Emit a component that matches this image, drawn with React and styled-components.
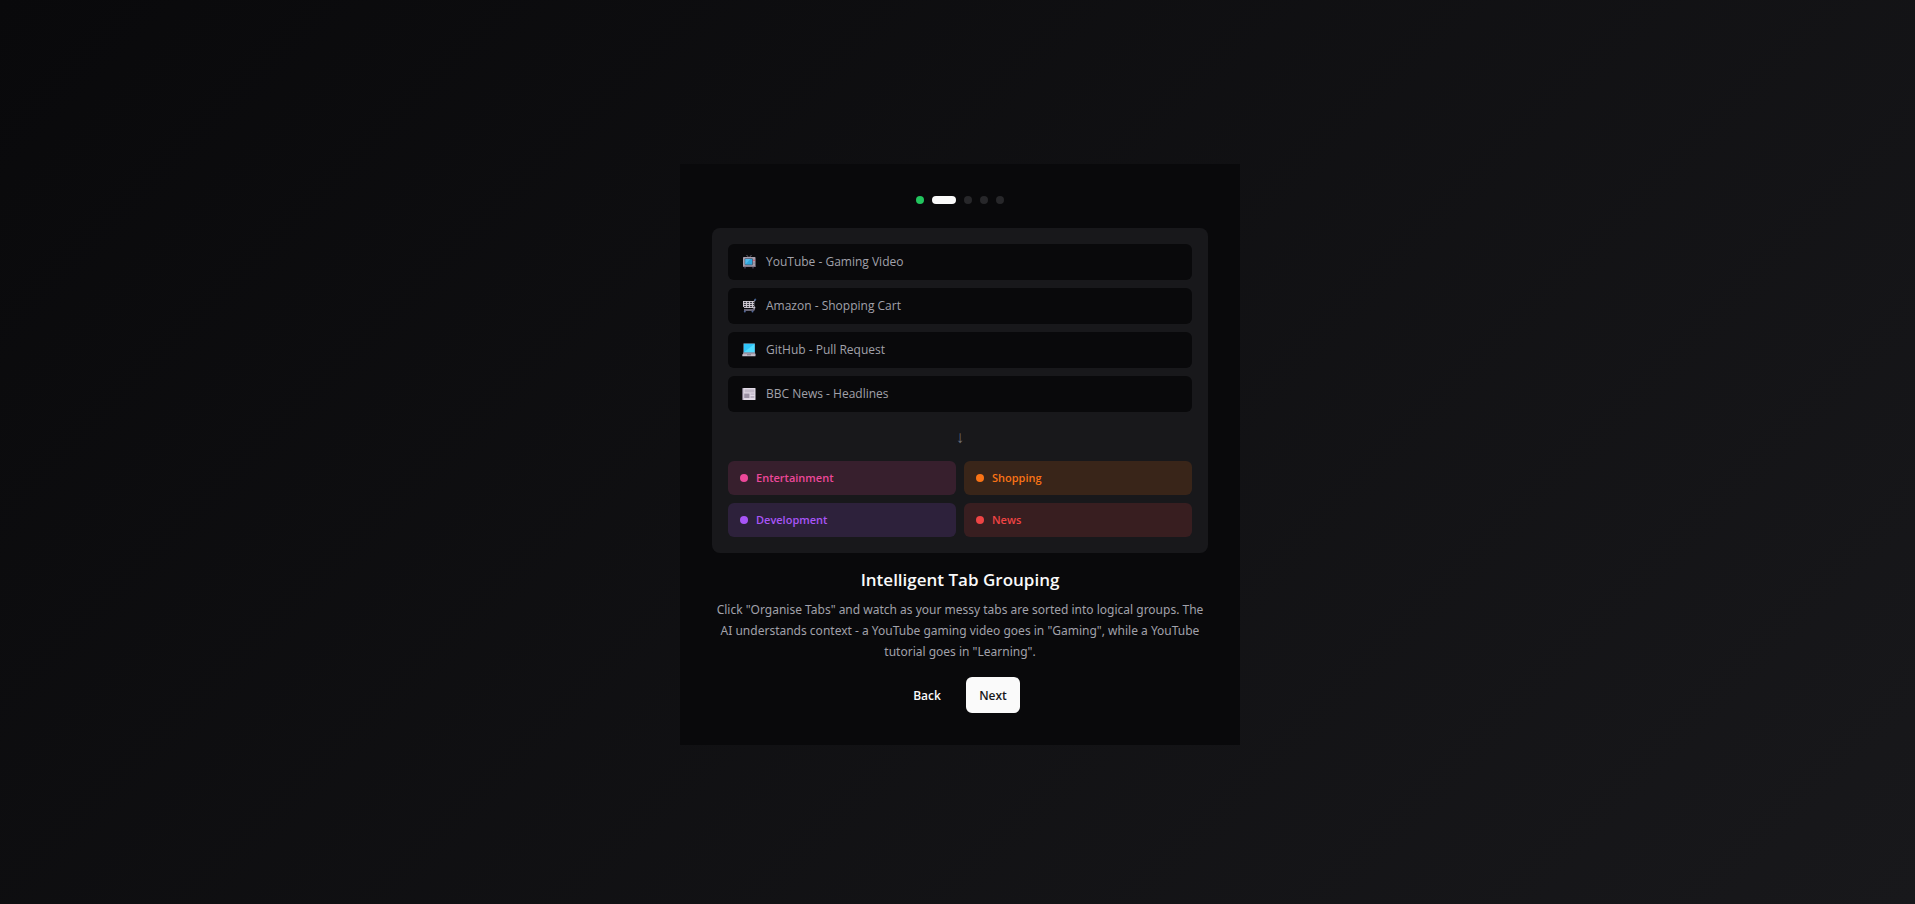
import React from "react";
import styled, { createGlobalStyle } from "styled-components";

const GlobalStyle = createGlobalStyle`
  * {
    box-sizing: border-box;
  }
  body {
    margin: 0;
    background: #09090b;
    color: #fafafa;
    font-family: "Open Sans", "Noto Sans", sans-serif;
    font-size: 12px;
  }
`;

const Page = styled.main`
  min-height: 100vh;
  padding: 5px 0 0 5px;
  display: flex;
  align-items: center;
  justify-content: center;
  background: linear-gradient(135deg, #09090b 0%, #18181b 100%);
`;

const Card = styled.section`
  width: 100%;
  max-width: 560px;
  padding: 32px;
  background: #09090b;
  text-align: center;
`;

const Steps = styled.div`
  display: flex;
  justify-content: center;
  gap: 8px;
  margin-bottom: 24px;
`;

const stepColors = {
  done: "#22c55e",
  active: "#fafafa",
  todo: "#27272a",
};

const Step = styled.span`
  width: ${(props) => (props.$state === "active" ? "24px" : "8px")};
  height: 8px;
  border-radius: 4px;
  background: ${(props) => stepColors[props.$state]};
`;

const Demo = styled.div`
  padding: 16px;
  margin-bottom: 16px;
  border-radius: 8px;
  background: #18181b;
  text-align: left;
`;

const TabList = styled.ul`
  display: flex;
  flex-direction: column;
  gap: 8px;
  margin: 0;
  padding: 0;
  list-style: none;
`;

const TabRow = styled.li`
  display: flex;
  align-items: center;
  gap: 8px;
  padding: 8px 12px;
  border-radius: 6px;
  background: #09090b;
  color: #a1a1aa;
  line-height: 20px;
`;

const Arrow = styled.div`
  padding: 12px 0;
  color: #71717a;
  font-size: 17px;
  line-height: 25px;
  text-align: center;
`;

const Groups = styled.div`
  display: grid;
  grid-template-columns: 1fr 1fr;
  gap: 8px;
`;

const Group = styled.div`
  display: flex;
  align-items: center;
  gap: 8px;
  padding: 8px 12px;
  border-radius: 6px;
  background: ${(props) => props.$color}26;
  color: ${(props) => props.$color};
  font-size: 11px;
  font-weight: 600;
  line-height: 18px;

  &::before {
    content: "";
    width: 8px;
    height: 8px;
    border-radius: 50%;
    background: ${(props) => props.$color};
  }
`;

const Title = styled.h1`
  margin: 0 0 8px;
  font-size: 17px;
  font-weight: 600;
  line-height: 22px;
`;

const Description = styled.p`
  margin: 0 0 15px;
  color: #a1a1aa;
  font-family: "Noto Sans", sans-serif;
  line-height: 21px;
`;

const Actions = styled.div`
  display: flex;
  justify-content: center;
  gap: 12px;
`;

const Button = styled.button`
  min-width: 54px;
  height: 36px;
  padding: 0 12px;
  border: none;
  border-radius: 6px;
  background: ${(props) => (props.$primary ? "#fafafa" : "transparent")};
  color: ${(props) => (props.$primary ? "#18181b" : "#fafafa")};
  font-family: inherit;
  font-size: 12px;
  font-weight: 600;
  cursor: pointer;
`;

const Icon = styled.svg`
  width: 18px;
  height: 16px;
  flex: none;
`;

const TvIcon = () => (
  <Icon viewBox="0 0 18 16" aria-hidden="true">
    <path d="M6.5 1l2 2.2M11.5 1l-2 2.2" stroke="#77717f" strokeWidth="0.9" fill="none" />
    <path d="M5 12.5v2M13 12.5v2" stroke="#4d4560" strokeWidth="1.3" />
    <rect x="3" y="3" width="12.5" height="10" rx="0.7" fill="#a79fac" />
    <rect x="3" y="11.8" width="12.5" height="1.2" fill="#827889" />
    <rect x="4.6" y="4.2" width="8.3" height="7" rx="1" fill="#495a73" />
    <rect x="5.4" y="5" width="6.7" height="5.5" rx="0.5" fill="#2fa5dc" />
    <path d="M5.4 10.5V5h5z" fill="#50baeb" />
    <circle cx="14" cy="6.3" r="0.8" fill="#d6405a" />
    <circle cx="14" cy="9" r="0.6" fill="#736a7e" />
  </Icon>
);

const CartIcon = () => (
  <Icon viewBox="0 0 18 16" aria-hidden="true">
    <path d="M15.6 1L13.8 4v6" stroke="#9b98a5" strokeWidth="1.1" fill="none" />
    <path d="M15.7 0.8l-1 1.7" stroke="#405f91" strokeWidth="1.6" />
    <path d="M3 3h11v7H4z" fill="#3b3a42" />
    <path
      d="M3 3.5h11M3 5.5h11M3.5 7.5h10.5M4 9.5h10M3.5 3v6M6.5 3v7M9.5 3v7M12.5 3v7"
      stroke="#d2cdd6"
      strokeWidth="0.9"
      fill="none"
    />
    <path d="M4 11h8.5l1.6-2.2 1.1.4-.2 2.6-1 1.2H4z" fill="#696575" />
    <circle cx="14.3" cy="9.4" r="1" fill="#c6c1cc" />
    <circle cx="4.8" cy="13.4" r="1" fill="#506598" />
    <circle cx="12.5" cy="13.4" r="1" fill="#506598" />
  </Icon>
);

const LaptopIcon = () => (
  <Icon viewBox="0 0 18 16" aria-hidden="true">
    <rect x="3.3" y="1.3" width="11.7" height="9.7" rx="0.6" fill="#5f8da8" />
    <rect x="4" y="2" width="10.4" height="8.3" fill="#2fc4f8" />
    <path d="M4 10.3L14.4 2v8.3z" fill="#4fdcff" />
    <path d="M3.3 10.5H15l.6 2.5H2.7z" fill="#9d95a4" />
    <rect x="2.3" y="12.3" width="13.2" height="2" rx="0.4" fill="#c4bdca" />
    <rect x="7" y="12.3" width="4" height="1" fill="#817989" />
  </Icon>
);

const NewsIcon = () => (
  <Icon viewBox="0 0 18 16" aria-hidden="true">
    <rect x="2.2" y="2" width="2" height="12" rx="0.6" fill="#93899b" />
    <rect x="3.3" y="2" width="12.2" height="12" rx="0.6" fill="#e2dbe7" />
    <rect x="4.5" y="3.3" width="9.8" height="3.2" fill="#c3bac9" />
    <rect x="4.2" y="7.5" width="5.3" height="4.6" fill="#998fa2" />
    <rect x="10.5" y="7.5" width="3.8" height="1.2" fill="#bcb2c3" />
    <rect x="10.5" y="10" width="3.8" height="2" fill="#bcb2c3" />
  </Icon>
);

const steps = ["done", "active", "todo", "todo", "todo"];

const tabs = [
  { icon: <TvIcon />, label: "YouTube - Gaming Video" },
  { icon: <CartIcon />, label: "Amazon - Shopping Cart" },
  { icon: <LaptopIcon />, label: "GitHub - Pull Request" },
  { icon: <NewsIcon />, label: "BBC News - Headlines" },
];

const groups = [
  { name: "Entertainment", color: "#ec4899" },
  { name: "Shopping", color: "#f97316" },
  { name: "Development", color: "#a855f7" },
  { name: "News", color: "#ef4444" },
];

const App = () => {
  return (
    <>
      <GlobalStyle />
      <Page>
        <Card>
          <Steps>
            {steps.map((state, i) => (
              <Step key={i} $state={state} />
            ))}
          </Steps>
          <Demo>
            <TabList>
              {tabs.map((tab) => (
                <TabRow key={tab.label}>
                  {tab.icon}
                  {tab.label}
                </TabRow>
              ))}
            </TabList>
            <Arrow>↓</Arrow>
            <Groups>
              {groups.map((group) => (
                <Group key={group.name} $color={group.color}>
                  {group.name}
                </Group>
              ))}
            </Groups>
          </Demo>
          <Title>Intelligent Tab Grouping</Title>
          <Description>
            Click "Organise Tabs" and watch as your messy tabs are sorted into
            logical groups. The AI&nbsp;understands context - a YouTube gaming
            video goes in "Gaming", while a YouTube tutorial goes in "Learning".
          </Description>
          <Actions>
            <Button type="button">Back</Button>
            <Button type="button" $primary>
              Next
            </Button>
          </Actions>
        </Card>
      </Page>
    </>
  );
};

export default App;
